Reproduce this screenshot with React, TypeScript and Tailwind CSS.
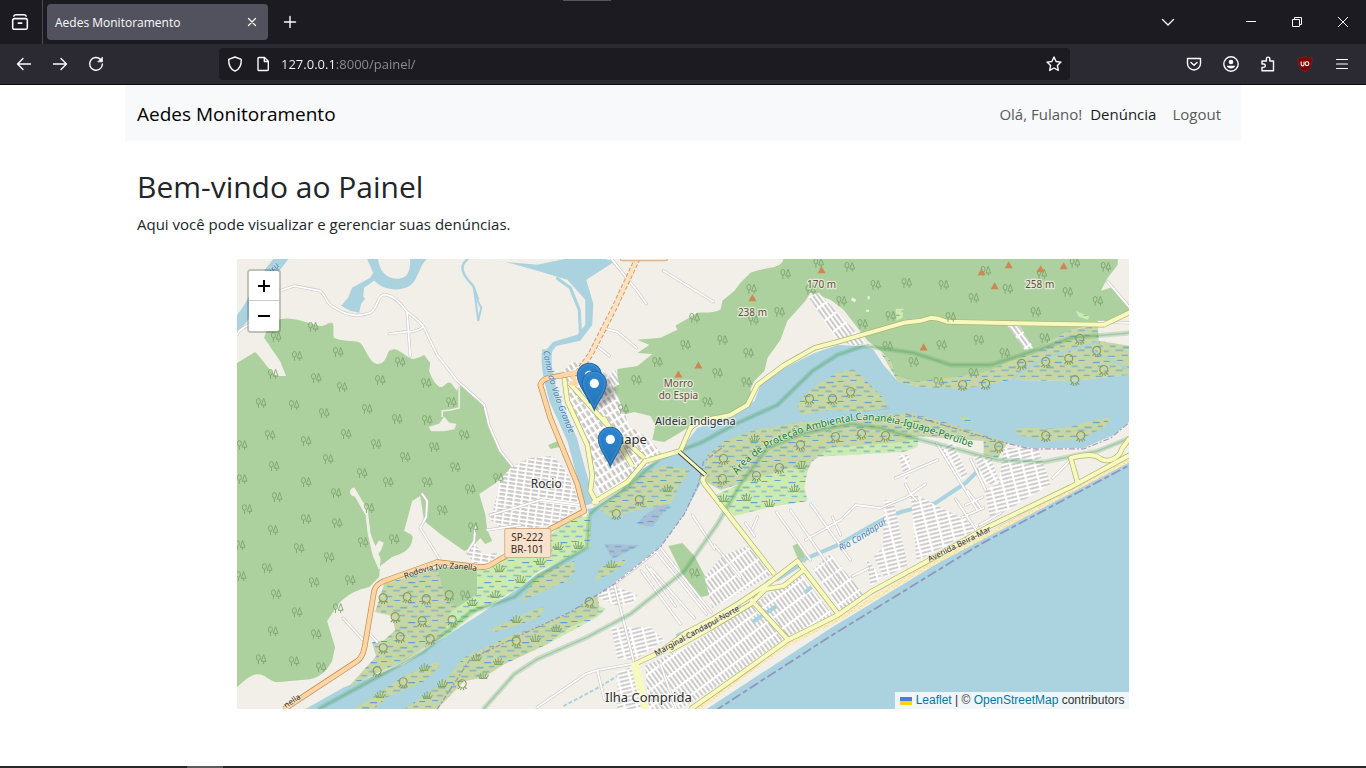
import React from "react";

type Pt = [number, number];

const forestTrees: Pt[] = [
  [276, 337], [313, 327], [297, 356], [338, 352], [400, 362], [273, 374], [316, 378], [342, 387], [380, 380],
  [426, 383], [451, 402], [261, 403], [294, 405], [367, 409], [324, 413], [397, 419], [427, 420], [270, 435],
  [346, 434], [306, 441], [376, 444], [464, 435], [434, 447], [242, 445], [328, 459], [405, 457], [274, 466],
  [455, 467], [362, 473], [242, 479], [498, 478], [306, 482], [388, 482], [427, 482], [277, 497], [247, 509],
  [336, 493], [369, 508], [306, 519], [337, 523], [273, 530], [240, 545], [299, 548], [363, 542], [394, 539],
  [329, 557], [267, 568], [241, 576], [314, 582], [350, 580], [276, 594], [297, 612], [338, 608], [273, 631],
  [316, 634], [261, 659], [294, 661], [442, 510], [470, 489], [473, 527], [321, 667], [465, 595], [751, 289],
  [785, 274], [818, 263], [779, 312], [694, 318], [753, 320], [685, 345], [722, 340], [748, 353], [657, 362],
  [717, 373], [636, 380], [746, 382], [707, 402], [623, 409], [810, 290], [849, 267], [875, 285], [906, 283],
  [943, 285], [973, 298], [841, 301], [985, 271], [1007, 289], [1041, 274], [1067, 292], [1074, 263],
  [1105, 267], [1097, 301], [1035, 312], [862, 324], [890, 316], [950, 317], [978, 340], [941, 345],
  [1044, 338], [1004, 353], [913, 362], [973, 373], [887, 346], [938, 382], [694, 573],
];

const mangroves: Pt[] = [
  [383, 598], [407, 597], [426, 599], [449, 595], [395, 617], [422, 621], [452, 620], [400, 637], [430, 639],
  [383, 648], [377, 671], [403, 682], [462, 684], [516, 641], [809, 399], [832, 399], [723, 459], [722, 479],
  [756, 476], [779, 468], [800, 445], [850, 392], [1021, 364], [1045, 362], [1068, 359], [1096, 351],
  [1079, 339], [1103, 370], [962, 385], [1045, 436], [861, 434], [885, 436], [835, 437], [998, 447],
  [1080, 436], [639, 500], [616, 514], [589, 602], [985, 384], [1074, 380],
];

const reeds: Pt[] = [
  [427, 695], [442, 683], [476, 657], [516, 619], [520, 579], [499, 568], [495, 594], [472, 602], [578, 545],
  [558, 546], [611, 564], [667, 488], [754, 438], [723, 498], [746, 497], [769, 503], [794, 488], [801, 465],
  [540, 561], [535, 638], [556, 628], [424, 667], [380, 694], [498, 661], [483, 675],
];

const peaks: Pt[] = [
  [752, 298], [821, 270], [698, 365], [678, 374], [981, 272], [1008, 265], [1040, 269], [1063, 266], [994, 286],
  [923, 347],
];

const forest = [
  "M237 363L255 352C262 358 268 370 277 376L286 376L280 361L264 338L267 330C274 320 282 318 290 319C302 320 310 324 319 326C325 327 328 322 332 323C335 326 332 334 334 338C340 342 354 340 360 343C366 349 369 363 377 364C388 364 386 350 391 350C398 347 402 355 412 359C418 358 420 357 424 355L430 363L429 371C432 380 437 387 441 387C446 386 448 378 453 386L457 391L459 383L484 405L489 426L500 451L512 466L504 475L494 484L479 494L485 514L487 530L492 541L485 544L480 538L472 547L464 551L440 534L424 521L420 496L412 501L404 531C410 534 414 535 412 540C411 550 401 554 392 557L380 566L379 577L369 587C357 590 350 593 340 602L327 621L335 647L332 661C326 671 320 677 310 679L277 682C269 681 266 674 257 674C250 675 245 680 237 687Z",
  "M783 259C780 270 768 266 750 273L740 283L734 291L722 301L720 310C710 314 706 312 697 313L675 326L677 330L660 338L637 340L649 345L637 353L652 354L637 366L617 369L617 385L609 391V405L617 416L634 412L650 416L655 425L652 440L664 442L684 430L700 418H737L751 397L750 389L754 381L764 371L767 358L780 340L787 321L805 301L810 293L830 300L843 310L867 341L880 351L890 361L895 376L913 386H933L963 385L980 375L1007 367L1030 353L1070 330L1097 325L1129 310V305L1110 288L1100 291L1107 278L1117 265V259Z",
  "M437 568L477 565V600L450 612L444 600Z",
  "M668 546L682 543L694 556L705 577L709 595L697 598L684 578Z",
  "M792 546L798 543L805 557V563L797 558Z",
  "M548 445L560 440L564 446L550 449Z",
];

const water = [
  // main channel
  "M305 709L344 687L404 664L444 637L477 616L520 587L537 574L587 547L590 517L587 509L597 507L620 491L637 471L670 455L684 445L697 428L724 418L754 401L760 385L784 368L814 353L837 345L863 346L873 350L883 365L897 381L917 387L963 388L1010 380L1070 381L1129 375V421L1113 435L1083 448H1030L997 441L963 431L917 415L863 418L804 425L760 433L724 448L704 470L700 484L684 514L660 547L614 584L570 612L514 637L464 660L437 697L404 709Z",
  // sea
  "M706 709L830 628L1000 525L1129 459V709Z",
  "M470 259L537 265L565 259H605L614 262L586 280L593 304L592 325L580 341L556 346L549 355L544 352L553 342L577 335L585 325V300L567 280L537 271L505 262Z",
  "M367 259H378C379 271 386 279 398 279C410 278 410 267 410 259H427C421 263 419 275 413 283C405 292 388 291 379 285L374 281L364 288L363 297L365 299L361 304L359 313L350 311L341 306L348 298L352 288L370 278L373 273Z",
  "M764 582L797 563L800 567L778 581Z",
];

const mangroveAreas = [
  "M384 584L437 568L446 600L462 610L444 635L404 660L348 687L376 656L372 642L384 640L395 630L392 616L375 612Z",
  "M354 709L405 675L437 661L440 666L424 681L387 697L374 709Z",
  "M404 709L444 681L464 657L514 634L535 627L570 612L597 594L599 606L605 609L597 617L570 627L547 644L504 664L484 677L464 681L437 709Z",
  "M490 629L535 609L544 607L540 617L520 624L495 632Z",
  "M520 602L537 574L574 561L575 571L567 581L537 594Z",
  "M594 581L600 567L624 559L625 564L610 574Z",
  "M599 509L630 484L640 475L664 465L690 470L680 484L670 504L647 508L610 517Z",
  "M797 405L804 395L817 385L835 373L853 369L863 378L883 398L887 408L860 412L830 410L800 415Z",
  "M702 480L707 455L724 441L754 430L800 422L837 421L863 416L910 413L940 421L973 431L1007 443L997 458L983 455V441L940 438L918 436L903 444L830 448L811 462L807 471L780 475L745 482L720 490Z",
  "M880 352L890 361L895 375L913 382L963 376L990 370L1007 362L1030 353L1070 330L1097 326L1098 341L1129 346V375L1070 381L1010 380L963 389L917 387L897 381Z",
  "M1015 428L1060 428L1110 417L1103 428L1077 440L1047 441L1017 435Z",
  "M957 418L964 416L972 421L968 423Z",
];

const marshAreas = [
  "M477 568L487 570L504 560L545 540L570 516L590 517V547L537 572L520 587L477 612L444 638L450 612L477 594Z",
  "M712 496L745 482L790 468L807 471L804 487L807 501L770 507L734 516Z",
  "M830 448L903 442L918 437L917 447L903 452L830 456L815 457Z",
  "M547 644L570 627L597 615L599 606L605 609L597 617L580 626Z",
  "M895 309L903 309L902 318L896 321Z",
  "M1075 311L1089 317L1087 320L1078 317Z",
];

const tidal = ["M604 544L640 545L612 559Z", "M645 515L672 495L668 506L652 527L636 524Z", "M866 399L875 397L890 409L868 411Z"];

const grids: { d: string; fill: string }[] = [
  { d: "M512 466L530 458L552 456L566 470L580 505L560 522L520 532L505 530L490 520L494 505L500 480Z", fill: "url(#gridA)" },
  { d: "M562 372L572 362L590 364L606 374L618 398L629 426L650 440L662 455L640 470L600 499L590 470L585 440L570 404Z", fill: "url(#gridB)" },
  { d: "M704 577L722 556L747 546L772 574L712 608Z", fill: "url(#gridC)" },
  { d: "M645 665L690 645L750 606L800 573L832 615L787 636L737 672L695 700L678 709H648Z", fill: "url(#gridC)" },
  { d: "M611 627L650 627L664 640L634 660L617 658Z", fill: "url(#gridD)" },
  { d: "M597 597L612 585L637 595L633 603L617 606Z", fill: "url(#gridD)" },
  { d: "M617 671L634 668L644 709H617Z", fill: "url(#gridD)" },
  { d: "M884 500L893 502L907 565L884 578L873 557L882 548Z", fill: "url(#gridD)" },
  { d: "M910 494L920 497L945 510L980 527L916 561Z", fill: "url(#gridD)" },
  { d: "M1003 448L1037 448L1050 484L990 520L984 489L998 484Z", fill: "url(#gridD)" },
  { d: "M937 448L953 441L967 475L957 481Z", fill: "url(#gridE)" },
  { d: "M973 455L990 458L1000 484H983Z", fill: "url(#gridE)" },
  { d: "M898 455L908 455L910 470L905 484Z", fill: "url(#gridE)" },
  { d: "M808 297L818 293L868 345L850 345L835 338Z", fill: "url(#gridC)" },
  { d: "M830 554L863 594L840 611L812 570Z", fill: "url(#gridC)" },
  { d: "M866 559L872 566L882 578L870 586Z", fill: "url(#gridD)" },
  { d: "M1006 325L1017 323L1033 348L1024 350Z", fill: "url(#gridC)" },
  { d: "M609 375L615 369L619 385H611Z", fill: "url(#gridC)" },
  { d: "M465 552L474 543L482 554L500 553L488 563H474Z", fill: "url(#gridA)" },
];

const minorRoads = [
  "M237 335C239 329 246 326 252 324M280 291L294 286L320 291C328 298 325 303 333 307C345 315 356 318 370 313C378 308 377 297 383 295C392 294 400 303 407 312C414 318 420 321 424 328L437 355L457 381L484 405L489 426L500 451L512 466",
  "M407 313L410 356M389 334L405 332C414 332 418 331 423 327",
  "M611 259L636 290L646 304M663 271L713 302M605 329L617 332L636 348M594 344L609 356",
  "M343 618L364 641M369 633L377 642M440 560L420 528L426 517L427 501L422 494M475 527L474 541L467 552",
  "M537 707L585 674L597 670L630 664M597 670L604 699M692 515L714 549M714 545L740 577M641 571L680 624M650 568L694 618M646 566L675 606",
  "M634 664L614 584L660 548L711 612M656 552L706 614M660 664L676 709",
  "M805 540L840 520L855 505L880 508L906 497L925 484M776 512L810 560M790 510L838 580M810 504L850 560M745 523L754 536M757 517L752 529M832 517L840 535M852 576L868 568M895 478L937 460M905 484L910 494L916 500",
  "M955 499L976 531M967 491L980 508M965 505L982 497M962 517L983 508M979 525L1000 513M1107 282L1129 308M1098 322L1129 323",
  "M1052 478L1068 462M936 443L976 509M970 459L985 490",
  "M490 515L540 500L580 505M487 530L520 525",
];

const yellowRoads = [
  "M690 709L737 676L787 640L837 615L870 592L927 561L987 527L1070 487L1129 455",
  "M1077 483L1070 458C1082 455 1094 453 1100 459C1110 464 1119 456 1121 449L1129 438",
  "M634 664L660 652L685 633L712 619L737 604L767 584L797 561L837 613",
  "M668 651L710 628L750 604L765 589L783 586L803 570",
  "M705 474L702 480L704 484L774 574",
  "M750 599L787 639",
  "M592 503L627 482L645 461L680 451L690 428C700 418 717 419 730 415L747 405L757 385L784 365L814 348L837 342L903 323L920 321L930 318L938 319L947 322L1103 325L1130 312",
  "M564 378L567 401L587 445L592 475L590 491L597 504",
  "M569 383L607 425L644 458M603 417L620 445L632 466",
];

const orangeRoad =
  "M284 709L357 661C364 656 364 648 365 644L374 591C376 584 380 583 384 581L437 562L480 567C490 568 496 560 504 557L550 529L584 511L577 484L550 418L540 385C542 378 546 378 577 373";

const parkLines = [
  "M318 709L377 677L424 651L470 612L514 597L537 577L587 547L589 515L597 507L627 487L660 458L700 443L735 424L777 405L812 371L837 355L863 346L913 353L950 365L990 365L1037 350L1070 338L1129 333",
  "M483 709L514 674L537 659L587 637L630 614L684 571L717 524L740 484L767 448L804 433L850 424L880 428L913 438L963 451L997 460L1043 462L1097 451L1129 438",
];

function MapDrawing() {
  return (
    <svg
      viewBox="237 259 892 450"
      preserveAspectRatio="xMidYMid slice"
      className="block h-full w-full"
      role="img"
      aria-label="Mapa de Iguape e Ilha Comprida"
      fontFamily="'Noto Sans', sans-serif"
    >
      <defs>
        <g id="trees" fill="none" stroke="#7ba46f" strokeWidth="0.9">
          <ellipse cx="-2.6" cy="-1.6" rx="2" ry="2.8" />
          <path d="M-2.6 1V5M2.6 -4.5L0.2 2.2H5L2.6 -4.5ZM2.6 2.2V5" />
        </g>
        <g id="mangrove" fill="none" stroke="#87995c" strokeWidth="1.1">
          <path d="M-2 3A4 4 0 1 1 2 3M-1.6 2.4L-4.4 5M-0.6 3L-1.6 6M0.8 3L1.6 6M1.8 2.4L4.4 4.6" />
        </g>
        <g id="reed" fill="none" stroke="#7fa766" strokeWidth="1">
          <path d="M0 3V-4M-1.6 3L-3 -2.4M1.6 3L3.4 -3M-3 3L-5 0M3 3L5.4 0M-4 3.4H4" />
        </g>
        <pattern id="wet" width="38" height="20" patternUnits="userSpaceOnUse">
          <path
            d="M1 1.5h6M14 .5h6M28 2.5h7M7 6.5h6M20 7.5h7M33 6.5h5M1 11.5h5M13 10.5h7M27 11.5h6M5 16.5h7M19 15.5h6M31 16.5h6"
            stroke="#559fda"
            strokeWidth="1"
          />
        </pattern>
        <pattern id="sand" width="5" height="5" patternUnits="userSpaceOnUse">
          <rect width="5" height="5" fill="#fbeec0" />
          <path d="M1 1h1M3 3h1M4 1h.6" stroke="#f0bd6e" />
        </pattern>
        <pattern id="gridA" width="8" height="4" patternUnits="userSpaceOnUse" patternTransform="rotate(8)">
          <rect width="8" height="4" fill="#cbc8c6" />
          <path d="M0 1.5H8M2 0V4" stroke="#fff" strokeWidth="1.8" />
        </pattern>
        <pattern id="gridB" width="5" height="8" patternUnits="userSpaceOnUse" patternTransform="rotate(-32)">
          <rect width="5" height="8" fill="#cbc8c6" />
          <path d="M0 2H5M2 0V8" stroke="#fff" strokeWidth="2.2" />
        </pattern>
        <pattern id="gridC" width="4" height="14" patternUnits="userSpaceOnUse" patternTransform="rotate(-36)">
          <rect width="4" height="14" fill="#c8c6c4" />
          <path d="M0 2H4M1.5 0V14" stroke="#fff" strokeWidth="2.1" />
        </pattern>
        <pattern id="gridD" width="12" height="4" patternUnits="userSpaceOnUse" patternTransform="rotate(-14)">
          <rect width="12" height="4" fill="#c9c7c5" />
          <path d="M0 1.5H12M3 0V4" stroke="#fff" strokeWidth="2.1" />
        </pattern>
        <pattern id="gridE" width="10" height="4" patternUnits="userSpaceOnUse" patternTransform="rotate(-28)">
          <rect width="10" height="4" fill="#c9c7c5" />
          <path d="M0 1.5H10M3 0V4" stroke="#fff" strokeWidth="2.1" />
        </pattern>
        <linearGradient id="pin" x1="0" y1="0" x2="0" y2="1">
          <stop offset="0" stopColor="#2e86cf" />
          <stop offset="1" stopColor="#2474b8" />
        </linearGradient>
        <filter id="soft" x="-50%" y="-50%" width="200%" height="200%">
          <feGaussianBlur stdDeviation="2" />
        </filter>
        <path id="lblValo" d="M543 351C547 380 555 402 574 446" />
        <path id="lblApa" d="M737 475C755 448 800 428 860 420C900 421 928 433 985 452" />
        <path id="lblIvo" d="M405 579C425 571 440 565 476 571" />
        <path id="lblElla" d="M286 708L330 679" />
        <path id="lblMarginal" d="M656 656L680 643L760 599" />
        <path id="lblBeira" d="M929 562L1000 526" />
        <path id="lblCandapui" d="M840 551C856 544 872 532 899 515" />
        <path id="lblRibeira" d="M270 278L291 251" />
      </defs>

      <rect x="237" y="259" width="892" height="450" fill="#f2efe9" />
      {forest.map((d) => (
        <path key={d} d={d} fill="#add19e" />
      ))}
      <g fill="#f2efe9" stroke="#f2efe9">
        <path d="M354 488a3 3 0 1 0 1 8l11 19l2 18l5 22l6 14l1-10l-7-17l-3-8l-3-24z" />
        <path d="M374 549l5-8l4 2l-3 8l-6 6z" />
        <path d="M429 427l10-3l5-7l5 6l7 1l-2 5l-10 2l-13 0z" strokeWidth="0.5" />
        <path d="M442 417V411l8-1l9-2V385" fill="none" strokeWidth="1.5" />
        <path d="M851 299l4 2M867 310l0 2M867 298l2 0" strokeWidth="3" />
      </g>

      {water.map((d) => (
        <path key={d} d={d} fill="#aad3df" />
      ))}
      <g fill="none" stroke="#aad3df">
        <path d="M284 255L274 268C256 288 256 306 234 327" strokeWidth="12" />
        <path d="M468 259C458 266 462 275 473 286L478 300" strokeWidth="2.5" />
        <path d="M474 290L478 321L481 308L477 300" strokeWidth="2" />
        <path d="M547 350C544 370 552 390 554 400L572 440L580 470L590 504" strokeWidth="10" />
        <path d="M556 278L570 288L579 310L580 332" strokeWidth="3" />
        <path d="M797 562L830 548C850 541 870 522 900 512L935 503L965 483L990 458" strokeWidth="4" />
        <path d="M563 706L597 688L630 668" strokeWidth="2" strokeDasharray="4 2" />
      </g>
      {tidal.map((d) => (
        <path key={d} d={d} fill="#a9bfd3" />
      ))}

      {mangroveAreas.map((d) => (
        <React.Fragment key={d}>
          <path d={d} fill="#c6d6a4" />
          <path d={d} fill="url(#wet)" />
        </React.Fragment>
      ))}
      {marshAreas.map((d) => (
        <React.Fragment key={d}>
          <path d={d} fill="#cdebb0" />
          <path d={d} fill="url(#wet)" />
        </React.Fragment>
      ))}
      <path d="M604 544L640 545L612 559ZM645 515L672 505L652 527L636 524Z" fill="url(#wet)" />
      <path d="M1012 380C1030 362 1050 355 1098 342M1090 350L1129 370" fill="none" stroke="#aad3df" strokeWidth="2" />

      {grids.map((g) => (
        <path key={g.d} d={g.d} fill={g.fill} />
      ))}
      <path d="M752 622L776 606M804 593L811 587" stroke="#aad3df" strokeWidth="4" />
      <path d="M676 636L708 622M712 619L740 604" stroke="#aad3df" strokeWidth="4" />
      <path d="M700 709L787 646L837 622L930 567L1129 462V456L1070 489L930 562L837 617L787 641L690 709Z" fill="url(#sand)" />

      <g fill="none" strokeLinecap="round" strokeLinejoin="round">
        {minorRoads.map((d) => (
          <path key={d} d={d} stroke="#c9c6c3" strokeWidth="3" />
        ))}
        {minorRoads.map((d) => (
          <path key={d} d={d} stroke="#fff" strokeWidth="1.8" />
        ))}
      </g>

      {parkLines.map((d) => (
        <g key={d} fill="none" stroke="#4f9f62" strokeLinejoin="round">
          <path d={d} strokeWidth="5" opacity="0.24" />
          <path d={d} strokeWidth="1.6" opacity="0.3" />
        </g>
      ))}
      <g fill="none" stroke="#8f86b5" strokeWidth="1.2" opacity="0.8">
        <path d="M437 709L470 659L535 628L570 612L614 584L660 547L684 514L698 484L703 462L724 446" strokeDasharray="5 2 2 2" />
        <path d="M905 414L963 431L997 441L1030 449H1083L1110 438L1129 422" strokeDasharray="6 2 2 2" />
      </g>
      <path d="M714 711L830 636L980 544L1129 465" fill="none" stroke="#8f96bf" strokeWidth="1.8" strokeDasharray="10 3 5 3" />

      <g fill="none" strokeLinejoin="round">
        {yellowRoads.map((d) => (
          <path key={d} d={d} stroke="#b3b171" strokeWidth="5.4" />
        ))}
        {yellowRoads.map((d) => (
          <path key={d} d={d} stroke="#f7fabf" strokeWidth="4" />
        ))}
        <path d="M634 662L645 709" stroke="#f7fabf" strokeWidth="8" />
        <path d="M679 452L705 475" stroke="#333" strokeWidth="4.600" />
        <path d="M679 452L705 475" stroke="#f7fabf" strokeWidth="3" />
        <path d={orangeRoad} stroke="#c58a4d" strokeWidth="5.600" />
        <path d={orangeRoad} stroke="#fcd6a4" strokeWidth="4.200" />
        <path d="M577 373L590 355L614 308L637 259" stroke="#dd9860" strokeWidth="6" strokeDasharray="4 2" />
        <path d="M577 373L590 355L614 308L637 259" stroke="#fce2c1" strokeWidth="4" />
        <path d="M561 375L580 371M571 373L576 384L569 383" stroke="#fcd6a4" strokeWidth="4" />
      </g>

      {forestTrees.map(([x, y]) => (
        <use key={`${x}-${y}`} href="#trees" x={x} y={y} />
      ))}
      {mangroves.map(([x, y]) => (
        <use key={`${x}-${y}`} href="#mangrove" x={x} y={y} />
      ))}
      {reeds.map(([x, y]) => (
        <use key={`${x}-${y}`} href="#reed" x={x} y={y} />
      ))}
      {peaks.map(([x, y]) => (
        <path key={`${x}-${y}`} d={`M${x} ${y - 3.5}l4 7h-8z`} fill="#d08552" />
      ))}

      <rect x="620" y="253" width="47" height="8" rx="2" fill="#fbe3cd" stroke="#d9a67c" />
      <rect x="504.500" y="528.500" width="46" height="29" rx="2" fill="#f9e2cd" stroke="#dcae88" />
      <g fontSize="10" fill="#3d2b1a" textAnchor="middle">
        <text x="527" y="541">SP-222</text>
        <text x="527" y="553">BR-101</text>
      </g>

      <g paintOrder="stroke" stroke="#ffffff" strokeOpacity="0.6" strokeWidth="2.5" strokeLinejoin="round">
        <g fontSize="10" fill="#6b4a3a" textAnchor="middle">
          <text x="752" y="316">238 m</text>
          <text x="821" y="288">170 m</text>
          <text x="1039" y="288">258 m</text>
          <text x="678" y="387">Morro</text>
          <text x="678" y="399">do Espia</text>
        </g>
        <g fill="#2c2c2c" textAnchor="middle">
          <text x="695" y="425" fontSize="11">Aldeia Indigena</text>
          <text x="625" y="444" fontSize="13">Iguape</text>
          <text x="546" y="488" fontSize="12">Rocio</text>
          <text x="648" y="702" fontSize="13">Ilha Comprida</text>
        </g>
      </g>
      <g paintOrder="stroke" stroke="#ffffff" strokeOpacity="0.35" strokeWidth="1.5" strokeLinejoin="round">
        <g fontSize="8" fill="#2f2a1c">
          <text><textPath href="#lblMarginal">Marginal Candapui Norte</textPath></text>
          <text><textPath href="#lblBeira">Avenida Beira-Mar</textPath></text>
          <text><textPath href="#lblIvo">Rodovia Ivo Zanella</textPath></text>
          <text><textPath href="#lblElla">nella</textPath></text>
        </g>
        <g fontSize="9" fill="#3f80b5" fontStyle="italic">
          <text><textPath href="#lblValo">Canal do Valo Grande</textPath></text>
          <text><textPath href="#lblCandapui">Rio Candapuí</textPath></text>
          <text><textPath href="#lblRibeira">eiru</textPath></text>
        </g>
      </g>
      <g paintOrder="stroke" stroke="#ffffff" strokeOpacity="0.5" strokeWidth="1.5" strokeLinejoin="round">
        <text fontSize="10" fill="#0f7a2c">
          <textPath href="#lblApa">Área de Proteção Ambiental Cananéia-Iguape-Peruíbe</textPath>
        </text>
      </g>

      {[[589, 363], [594, 371], [610, 427]].map(([x, y]) => (
        <g key={`${x}-${y}`} transform={`translate(${x} ${y})`}>
          <path d="M0 39L8 21C13 13 25 14 20 24C16 31 7 35 0 39Z" fill="#000" opacity="0.3" filter="url(#soft)" />
          <path
            d="M0 39.500C-3 31 -12 22 -12 12.300A12 12 0 0 1 12 12.300C12 22 3 31 0 39.500Z"
            fill="url(#pin)"
            stroke="#2566a0"
          />
          <path d="M0 36C-3 28 -10.800 21 -10.800 12.300A10.800 10.800 0 0 1 10.800 12.300C10.800 21 3 28 0 36Z" fill="none" stroke="#5ea2dc" strokeWidth="0.8" opacity="0.5" />
          <circle cy="12.500" r="4.600" fill="#fff" />
        </g>
      ))}
    </svg>
  );
}

function Icon({ children, size = 16 }: { children: React.ReactNode; size?: number }) {
  return (
    <svg
      width={size}
      height={size}
      viewBox="0 0 16 16"
      fill="none"
      stroke="currentColor"
      strokeWidth="1.4"
      strokeLinecap="round"
      strokeLinejoin="round"
      aria-hidden="true"
    >
      {children}
    </svg>
  );
}

function ChromeButton({ label, className = "", children }: { label: string; className?: string; children: React.ReactNode }) {
  return (
    <button type="button" aria-label={label} className={`flex h-8 items-center justify-center text-[#fbfbfe] ${className}`}>
      {children}
    </button>
  );
}

function TabStrip() {
  return (
    <div className="flex h-11 items-center bg-[#1c1b22]">
      <ChromeButton label="Visualização do Firefox" className="w-[42px] pr-0.5">
        <Icon size={18}>
          <path d="M1.500 6.500A1.500 1.500 0 0 1 3 5h10a1.500 1.500 0 0 1 1.500 1.500V13a1.500 1.500 0 0 1-1.500 1.500H3A1.500 1.500 0 0 1 1.500 13zM2.500 2.800c.4-.9.9-1.300 1.900-1.300h7.200c1 0 1.500.4 1.900 1.300M6.500 9h3" />
        </Icon>
      </ChromeButton>
      <div className="h-11 w-px bg-[#4a4a52]" />
      <div className="ml-1 flex h-9 w-[221px] items-center justify-between rounded bg-[#52525e] pr-2 pl-2 text-[#fbfbfe]">
        <span className="pt-0.5 text-[12px]">Aedes Monitoramento</span>
        <button type="button" aria-label="Fechar aba" className="flex h-4 w-4 items-center justify-center">
          <Icon size={14}>
            <path d="M4 4l8 8M12 4l-8 8" />
          </Icon>
        </button>
      </div>
      <ChromeButton label="Nova aba" className="ml-1.5 w-8">
        <Icon>
          <path d="M8 2.500v11M2.500 8h11" />
        </Icon>
      </ChromeButton>
      <div className="ml-auto flex items-center">
        <ChromeButton label="Listar abas" className="mr-[37px] w-[46px]">
          <Icon>
            <path d="M2.500 5.500L8 11l5.500-5.500" />
          </Icon>
        </ChromeButton>
        <ChromeButton label="Minimizar" className="w-[46px]">
          <svg width="10" height="10" viewBox="0 0 10 10" stroke="currentColor" aria-hidden="true">
            <path d="M0 4.500h10" />
          </svg>
        </ChromeButton>
        <ChromeButton label="Restaurar" className="w-[46px]">
          <svg width="10" height="10" viewBox="0 0 10 10" fill="none" stroke="currentColor" aria-hidden="true">
            <path d="M.5 2.500h7v7h-7zM2.500 2.500v-2h7v7h-2" />
          </svg>
        </ChromeButton>
        <ChromeButton label="Fechar" className="w-[46px]">
          <svg width="10" height="10" viewBox="0 0 10 10" stroke="currentColor" aria-hidden="true">
            <path d="M0 0l10 10M10 0L0 10" />
          </svg>
        </ChromeButton>
      </div>
    </div>
  );
}

function Toolbar() {
  return (
    <div className="flex h-[41px] items-center border-b border-[#0c0c0d] bg-[#2b2a33]">
      <div className="ml-2 flex gap-1">
        <ChromeButton label="Voltar" className="w-8">
          <Icon><path d="M14.500 8h-13M7 2.500L1.500 8L7 13.500" /></Icon>
        </ChromeButton>
        <ChromeButton label="Avançar" className="w-8">
          <Icon><path d="M1.500 8h13M9 2.500L14.500 8L9 13.500" /></Icon>
        </ChromeButton>
        <ChromeButton label="Recarregar" className="w-8">
          <Icon>
            <path d="M12.600 3.400A6.400 6.400 0 1 0 14.400 8" />
            <path d="M14.400 1.500v4.300h-4.300z" fill="currentColor" strokeWidth="0.8" />
          </Icon>
        </ChromeButton>
      </div>
      <div className="ml-[107px] flex h-8 flex-1 items-center rounded bg-[#1c1b22] pr-2 pl-2 text-[#fbfbfe]">
        <button type="button" aria-label="Proteção" className="flex">
          <Icon><path d="M8 1L1.700 3.400C1.500 9 3.500 13.200 8 15.200C12.500 13.200 14.500 9 14.300 3.400Z" /></Icon>
        </button>
        <button type="button" aria-label="Informações do site" className="ml-3 flex">
          <Icon><path d="M3 2.500A1 1 0 0 1 4 1.500h5.500L13.300 5.300V13.500a1 1 0 0 1-1 1H4a1 1 0 0 1-1-1zM9.300 1.800v3.700h3.700" /></Icon>
        </button>
        <input
          type="text"
          aria-label="Endereço"
          defaultValue="127.0.0.1:8000/painel/"
          className="ml-2.5 min-w-0 flex-1 bg-[linear-gradient(90deg,#fbfbfe_54px,#8f8f98_54px)] bg-clip-text pt-0.5 text-[13px] text-transparent outline-none"
        />
        <button type="button" aria-label="Favoritar" className="flex">
          <Icon>
            <path d="M8 1l2.100 4.500l4.900.6l-3.600 3.400l.9 4.900L8 12l-4.300 2.400l.9-4.900L1 6.100l4.900-.6z" />
          </Icon>
        </button>
      </div>
      <div className="mr-2 ml-[108px] flex items-center gap-[5px]">
        <ChromeButton label="Pocket" className="w-8">
          <Icon><path d="M1.500 2.500h13v5a6.500 6.500 0 0 1-13 0zM5 6.500l3 2.800l3-2.800" /></Icon>
        </ChromeButton>
        <ChromeButton label="Conta" className="w-8">
          <Icon>
            <circle cx="8" cy="8" r="7.200" />
            <circle cx="8" cy="6" r="2.300" fill="currentColor" stroke="none" />
            <path d="M3.800 9.700h8.400C11.800 11.500 10 12.500 8 12.500s-3.800-1-4.200-2.800z" fill="currentColor" stroke="none" />
          </Icon>
        </ChromeButton>
        <ChromeButton label="Extensões" className="w-8">
          <Icon>
            <path d="M2 14.800h11.500V5H9.800V2.800a1.700 1.700 0 0 0-3.400 0V5H2v3h1.600a1.700 1.700 0 0 1 0 3.400H2z" />
          </Icon>
        </ChromeButton>
        <ChromeButton label="uBlock Origin" className="w-8">
          <svg width="16" height="16" viewBox="0 0 16 16" aria-hidden="true">
            <path d="M8 .3C5.500 1.900 3.500 2.200 1 2.200c0 7 1 10.500 7 13.600c6-3.100 7-6.600 7-13.600C12.500 2.200 10.500 1.900 8 .3z" fill="#800000" stroke="#a33" strokeWidth=".4" />
            <path d="M4.200 5.500v3a1.400 1.400 0 0 0 2.800 0v-3" fill="none" stroke="#fff" strokeWidth="1.1" />
            <circle cx="10" cy="7.700" r="1.900" fill="none" stroke="#fff" strokeWidth="1.1" />
          </svg>
        </ChromeButton>
        <ChromeButton label="Menu" className="w-8">
          <Icon><path d="M2.500 3.500h11M2.500 8h11M2.500 12.500h11" strokeWidth="1.200" /></Icon>
        </ChromeButton>
      </div>
    </div>
  );
}

export default function App() {
  return (
    <div className="flex min-h-screen flex-col bg-white font-['Open_Sans','Noto_Sans',sans-serif] text-[#212529]">
      <header className="relative">
        <TabStrip />
        <Toolbar />
        <div className="absolute top-0 left-[563px] h-px w-12 bg-[#55555c]" />
      </header>
      <div className="mx-auto w-full max-w-[1140px] flex-1 px-3">
        <nav className="flex h-14 items-center justify-between bg-[#f8f9fa] px-3 pt-0.5">
          <a href="/" className="text-[19px] text-black">Aedes Monitoramento</a>
          <div className="flex items-center text-[15px] text-[#595a5b]">
            <span>Olá, Fulano!</span>
            <a href="/denuncia" className="px-2 text-[#1b1c1d]">Denúncia</a>
            <a href="/logout" className="px-2">Logout</a>
          </div>
        </nav>
        <main className="px-3 pt-6">
          <h1 className="text-[30px] leading-[44px]">Bem-vindo ao Painel</h1>
          <p className="pt-[3px] text-[15px] leading-6">Aqui você pode visualizar e gerenciar suas denúncias.</p>
        </main>
        <section className="relative mx-auto mt-[23px] h-[450px] w-4/5 overflow-hidden">
          <MapDrawing />
          <div className="absolute top-2.5 left-2.5 flex flex-col overflow-hidden rounded border-2 border-black/20 bg-clip-padding font-['Liberation_Sans',sans-serif] text-black">
            <button type="button" aria-label="Aproximar" className="flex h-[30px] w-[30px] items-center justify-center border-b border-[#ccc] bg-white">
              <svg width="14" height="14" viewBox="0 0 14 14" stroke="currentColor" strokeWidth="2" aria-hidden="true"><path d="M1 7h12M7 1v12" /></svg>
            </button>
            <button type="button" aria-label="Afastar" className="flex h-[30px] w-[30px] items-center justify-center bg-white">
              <svg width="14" height="14" viewBox="0 0 14 14" stroke="currentColor" strokeWidth="2" aria-hidden="true"><path d="M1 7h12" /></svg>
            </button>
          </div>
          <div className="absolute right-0 bottom-0 flex items-center gap-1 bg-white/80 px-[5px] font-['Liberation_Sans',sans-serif] text-[12px] leading-[17px] text-[#333]">
            <svg width="12" height="8" viewBox="0 0 12 8" aria-hidden="true">
              <path fill="#4c7be1" d="M0 0h12v4H0z" />
              <path fill="#ffd500" d="M0 4h12v4H0z" />
            </svg>
            <span>
              <a href="https://leafletjs.com" className="text-[#0078a8]">Leaflet</a> | ©{" "}
              <a href="https://www.openstreetmap.org/copyright" className="text-[#0078a8]">OpenStreetMap</a> contributors
            </span>
          </div>
        </section>
      </div>
      <footer className="h-0.5 bg-[#28282b] pl-[187px]">
        <div className="h-0.5 w-9 bg-[#5c5c60]" />
      </footer>
    </div>
  );
}
